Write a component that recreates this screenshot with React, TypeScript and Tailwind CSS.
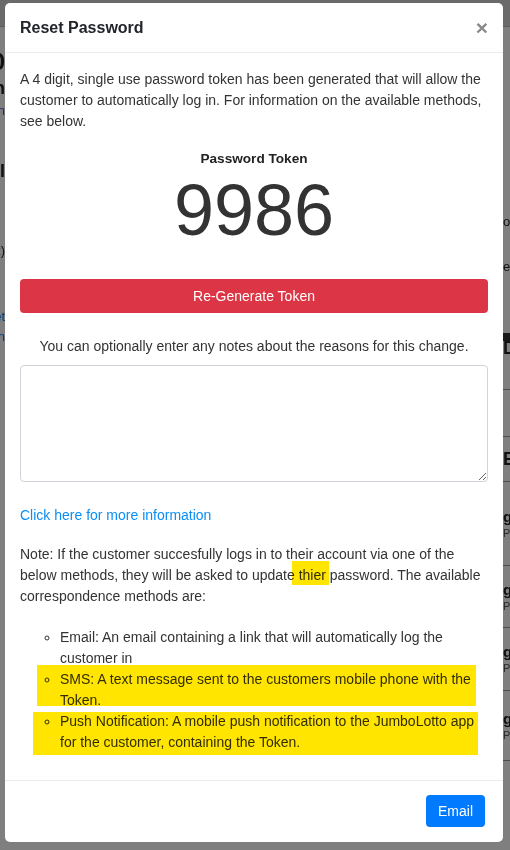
import { clsx } from "clsx";

const Highlight = ({ className }: { className?: string }) => (
  <span
    className={clsx(
      "pointer-events-none absolute bg-[#ffe500] mix-blend-multiply",
      className
    )}
  />
);

// the page behind the modal, only its edges are visible
const BackgroundPage = () => (
  <div className="flex h-full flex-col">
    <div className="h-[27px] shrink-0 border-b border-[#bbb] bg-[#d4d4d4]" />
    <div className="flex flex-1 justify-between">
      <div className="flex w-[5px] flex-col items-end overflow-hidden text-[#222]">
        <div className="h-[22px] shrink-0" />
        <div className="flex h-[26px] shrink-0 justify-end text-[24px] font-bold leading-[26px]">
          2020
        </div>
        <div className="flex h-[26px] shrink-0 justify-end text-[18px] font-bold leading-[26px]">
          Admin
        </div>
        <div className="flex h-[20px] shrink-0 justify-end text-[13px] leading-[20px] text-[#6f42c1]">
          Admin
        </div>
        <div className="h-[38px] shrink-0" />
        <div className="flex h-[24px] shrink-0 justify-end text-[18px] font-bold leading-[24px]">
          Detail
        </div>
        <div className="h-[58px] shrink-0" />
        <div className="flex h-[20px] shrink-0 justify-end text-[13px] leading-[20px]">
          (x)
        </div>
        <div className="h-[46px] shrink-0" />
        <div className="flex h-[20px] shrink-0 justify-end text-[13px] leading-[20px] text-[#007bff]">
          Reset
        </div>
        <div className="flex h-[20px] shrink-0 justify-end text-[13px] leading-[20px] text-[#007bff]">
          Login
        </div>
        <div className="h-[75px] shrink-0 border-b border-[#999]" />
        <div className="h-[45px] shrink-0 border-b border-[#999]" />
        <div className="h-[83px] shrink-0 border-b border-[#999]" />
        <div className="h-[43px] shrink-0 border-b border-[#999]" />
        <div className="h-[65px] shrink-0 border-b border-[#999]" />
        <div className="h-[57px] shrink-0 border-b border-[#999]" />
      </div>
      <div className="flex w-[7px] flex-col overflow-hidden text-[#222]">
        <div className="h-[185px] shrink-0" />
        <div className="h-[20px] shrink-0 text-[13px] leading-[20px]">ou</div>
        <div className="h-[25px] shrink-0" />
        <div className="h-[20px] shrink-0 text-[13px] leading-[20px]">e</div>
        <div className="h-[56px] shrink-0" />
        <div className="h-[8px] shrink-0 bg-[#333]" />
        <div className="h-[7px] shrink-0 text-[18px] font-bold leading-[14px]">D</div>
        <div className="h-[42px] shrink-0 border-b border-[#999]" />
        <div className="h-[47px] shrink-0 border-b border-[#999]" />
        <div className="flex h-[45px] shrink-0 items-center border-b border-[#999] text-[18px] font-bold">
          E
        </div>
        {[84, 62, 63, 70].map((h, i) => (
          <div
            key={i}
            className="flex shrink-0 flex-col justify-center border-b border-[#999]"
            style={{ height: h }}
          >
            <div className="text-[15px] font-bold leading-[18px]">g</div>
            <div className="text-[11px] leading-[14px] text-[#555]">PM</div>
          </div>
        ))}
      </div>
    </div>
  </div>
);

export default function App() {
  return (
    <div className="relative h-[850px] w-[510px] overflow-hidden bg-white font-['Liberation_Sans',Arial,sans-serif]">
      <BackgroundPage />
      <div className="absolute inset-0 bg-black/50" />

      <div className="absolute left-[5px] top-[3px] flex w-[498px] flex-col rounded-[5px] bg-white">
        <div className="flex h-[50px] items-center justify-between border-b border-[#e9ecef] px-[15px]">
          <h5 className="text-[16px] font-bold text-[#212529]">
            Reset Password
          </h5>
          <button className="text-[21px] font-bold leading-none text-[#8a8a8a]">
            ×
          </button>
        </div>

        <div className="flex flex-col px-[15px] pb-[27px] pt-[16px] text-[14px] leading-[21px] text-[#333]">
          <p>
            A 4 digit, single use password token has been generated that will
            allow the customer to automatically log in. For information on the
            available methods, see below.
          </p>

          <div className="mt-[16px] text-center text-[13.6px] font-bold text-[#222]">
            Password Token
          </div>
          <div className="mt-[5px] text-center text-[72px] leading-[72px] text-[#333]">
            9986
          </div>

          <button className="mt-[33px] h-[34px] w-full rounded-[4px] bg-[#dc3545] text-[14px] text-white">
            Re-Generate Token
          </button>

          <p className="mt-[23px] text-center">
            You can optionally enter any notes about the reasons for this
            change.
          </p>
          <textarea className="mt-[8px] h-[117px] w-full rounded-[4px] border border-[#ced4da] px-3 py-1.5" />

          <a className="mt-[23px] self-start text-[#0a8ef5]" href="#">
            Click here for more information
          </a>

          <p className="mt-[18px]">
            Note: If the customer succesfully logs in to their account via one
            of the below methods, they will be asked to update{" "}
            <span className="relative">
              thier
              <Highlight className="-bottom-[2px] -left-[7px] -right-[3px] -top-[6px]" />
            </span>{" "}
            password. The available correspondence methods are:
          </p>

          <ul className="mt-[20px] list-[circle] pl-[40px]">
            <li>
              Email: An email containing a link that will automatically log the
              customer in
            </li>
            <li className="relative">
              SMS: A text message sent to the customers mobile phone with the
              Token.
              <Highlight className="-left-[23px] -top-[4px] bottom-[5px] right-[12px]" />
            </li>
            <li className="relative">
              Push Notification: A mobile push notification to the JumboLotto
              app for the customer, containing the Token.
              <Highlight className="-bottom-[2px] -left-[27px] right-[10px] top-[1px]" />
            </li>
          </ul>
        </div>

        <div className="flex justify-end border-t border-[#e9ecef] pb-[15px] pr-[18px] pt-[14px]">
          <button className="h-[32px] rounded-[4px] bg-[#007bff] px-[12px] text-[14px] text-white">
            Email
          </button>
        </div>
      </div>
    </div>
  );
}
